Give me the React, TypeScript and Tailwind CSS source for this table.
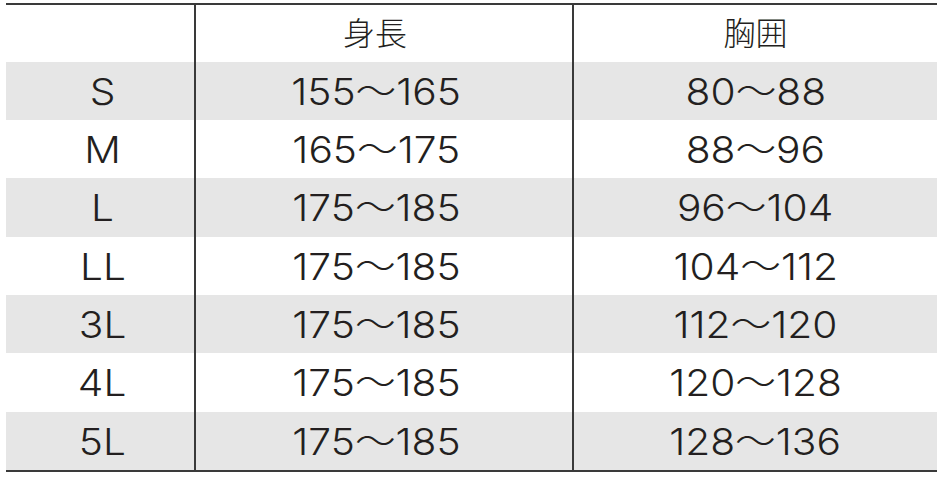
import React from "react";

const rows: [string, string, string][] = [
  ["S", "155～165", "80～88"],
  ["M", "165～175", "88～96"],
  ["L", "175～185", "96～104"],
  ["LL", "175～185", "104～112"],
  ["3L", "175～185", "112～120"],
  ["4L", "175～185", "120～128"],
  ["5L", "175～185", "128～136"],
];

function T({ children }: { children: React.ReactNode }) {
  return <span className="inline-block scale-x-110 text-[37px] leading-none">{children}</span>;
}

export default function App() {
  return (
    <div
      className="w-[940px] h-[478px] bg-white text-[#231f20] pt-[3px]"
      style={{ fontFamily: 'Inter, "Noto Sans CJK JP", sans-serif' }}
    >
      <div className="ml-[6px] w-[931px] border-t-2 border-b-2 border-[#3a3a3a] grid grid-cols-[188px_378px_1fr] grid-rows-[57px_58px_58px_59px_58px_58px_59px_58px] font-light">
        <div />
        <div className="border-l-2 border-[#3a3a3a] flex items-center justify-center pr-[18px] text-[32px] leading-none">
          身長
        </div>
        <div className="border-l-2 border-[#3a3a3a] flex items-center justify-center text-[32px] leading-none">
          胸囲
        </div>
        {rows.map(([s, h, c], i) => {
          const bg = i % 2 === 0 ? "bg-[#e6e6e6]" : "bg-white";
          return (
            <React.Fragment key={s}>
              <div className={`${bg} flex items-center justify-center pl-[5px]`}>
                <T>{s}</T>
              </div>
              <div className={`${bg} border-l-2 border-[#3a3a3a] flex items-center justify-center pr-[16px]`}>
                <T>{h}</T>
              </div>
              <div className={`${bg} border-l-2 border-[#3a3a3a] flex items-center justify-center`}>
                <T>{c}</T>
              </div>
            </React.Fragment>
          );
        })}
      </div>
    </div>
  );
}
